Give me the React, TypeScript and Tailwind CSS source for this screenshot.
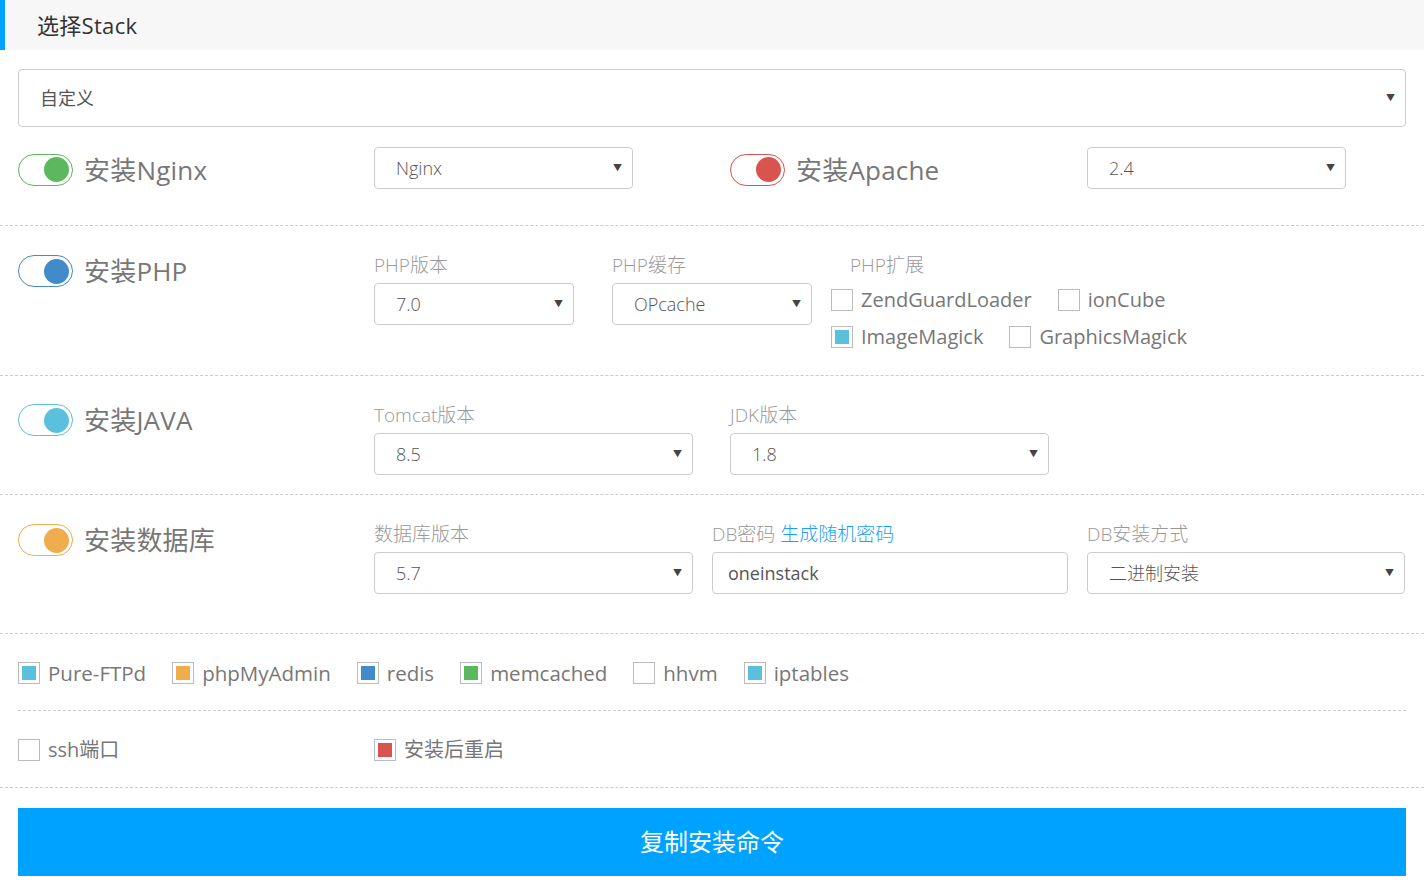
import React from 'react';

const font = { fontFamily: '"Open Sans", "Noto Sans CJK SC", sans-serif' };

type Tone = 'green' | 'red' | 'blue' | 'cyan' | 'orange';

const ring: Record<Tone, string> = {
  green: 'border-[#5cb85c]',
  red: 'border-[#d9534f]',
  blue: 'border-[#428bca]',
  cyan: 'border-[#5bc0de]',
  orange: 'border-[#f0ad4e]',
};

const fill: Record<Tone, string> = {
  green: 'bg-[#5cb85c]',
  red: 'bg-[#d9534f]',
  blue: 'bg-[#428bca]',
  cyan: 'bg-[#5bc0de]',
  orange: 'bg-[#f0ad4e]',
};

function Toggle({ tone, label }: { tone: Tone; label: string }) {
  return (
    <div className="flex items-center gap-[11px]">
      <div className={`w-[55px] h-[32px] rounded-full border ${ring[tone]} flex items-center justify-end pr-[3px] bg-white`}>
        <div className={`w-[25px] h-[25px] rounded-full ${fill[tone]}`} />
      </div>
      <span className="text-[26px] text-[#777] leading-none tracking-[0.2px]">{label}</span>
    </div>
  );
}

function Select({ value, className = '' }: { value: string; className?: string }) {
  return (
    <div className={`h-[42px] border border-[#ccc] rounded-[4px] bg-white flex items-center justify-between pl-[21px] pr-[10px] ${className}`}>
      <span className="text-[18px] text-[#555] font-light">{value}</span>
      <span className="text-[9px] text-[#444]">▼</span>
    </div>
  );
}

function Check({ label, tone, size = 'text-[20.5px]' }: { label: string; tone?: Tone; size?: string }) {
  return (
    <div className="flex items-center mr-[26px]">
      <div className="w-[22px] h-[22px] border border-[#bbb] bg-white flex items-center justify-center mr-[8px]">
        {tone && <div className={`w-[14px] h-[14px] ${fill[tone]}`} />}
      </div>
      <span className={`${size} text-[#777] leading-none`}>{label}</span>
    </div>
  );
}

function Label({ children }: { children: React.ReactNode }) {
  return <div className="text-[19px] text-[#999] font-light leading-[22px] mb-[7px]">{children}</div>;
}

export default function App() {
  return (
    <div className="w-[1424px] h-[884px] bg-white overflow-hidden" style={font}>
      <div className="h-[50px] bg-[#f7f7f7] flex items-center border-l-[5px] border-[#00a2ff] pl-[32px]">
        <span className="text-[22px] text-[#333] tracking-[0.3px]">选择Stack</span>
      </div>

      <div className="px-[18px] pt-[19px]">
        <div className="h-[58px] border border-[#ccc] rounded-[4px] flex items-center justify-between pl-[21px] pr-[10px]">
          <span className="text-[18px] text-[#555]">自定义</span>
          <span className="text-[9px] text-[#444]">▼</span>
        </div>
      </div>

      {/* Nginx / Apache */}
      <div className="flex items-center h-[99px] pb-[16px] border-b border-dashed border-[#ccc]">
        <div className="w-[356px] px-[18px] pt-[3px]"><Toggle tone="green" label="安装Nginx" /></div>
        <div className="w-[356px] px-[18px]"><Select value="Nginx" className="w-[259px]" /></div>
        <div className="w-[356px] px-[18px] pt-[3px]"><Toggle tone="red" label="安装Apache" /></div>
        <div className="w-[356px] px-[19px]"><Select value="2.4" className="w-[259px]" /></div>
      </div>

      {/* PHP */}
      <div className="flex h-[150px] pt-[28px] border-b border-dashed border-[#ccc]">
        <div className="w-[356px] px-[18px] pt-[1px]"><Toggle tone="blue" label="安装PHP" /></div>
        <div className="w-[238px] px-[18px]">
          <Label>PHP版本</Label>
          <Select value="7.0" className="w-[200px]" />
        </div>
        <div className="w-[238px] px-[18px]">
          <Label>PHP缓存</Label>
          <Select value="OPcache" className="w-[200px]" />
        </div>
        <div className="flex-1 pl-[18px]">
          <Label>PHP扩展</Label>
          <div className="ml-[-19px] flex flex-col gap-[15px] pt-[6px]">
            <div className="flex"><Check label="ZendGuardLoader" size="text-[20px]" /><Check label="ionCube" size="text-[20px]" /></div>
            <div className="flex"><Check label="ImageMagick" tone="cyan" size="text-[20px]" /><Check label="GraphicsMagick" size="text-[20px]" /></div>
          </div>
        </div>
      </div>

      {/* JAVA */}
      <div className="flex h-[119px] pt-[28px] border-b border-dashed border-[#ccc]">
        <div className="w-[356px] px-[18px]"><Toggle tone="cyan" label="安装JAVA" /></div>
        <div className="flex gap-[37px] pl-[18px]">
          <div className="w-[319px]">
            <Label>Tomcat版本</Label>
            <Select value="8.5" />
          </div>
          <div className="w-[319px]">
            <Label>JDK版本</Label>
            <Select value="1.8" />
          </div>
        </div>
      </div>

      {/* DB */}
      <div className="flex h-[139px] pt-[28px] border-b border-dashed border-[#ccc]">
        <div className="w-[356px] px-[18px] pt-[1px]"><Toggle tone="orange" label="安装数据库" /></div>
        <div className="flex gap-[19px] pl-[18px]">
          <div className="w-[319px]">
            <Label>数据库版本</Label>
            <Select value="5.7" />
          </div>
          <div className="w-[356px]">
            <Label>DB密码 <span className="text-[#1a9fff]">生成随机密码</span></Label>
            <div className="h-[42px] border border-[#ccc] rounded-[4px] flex items-center pl-[15px]">
              <span className="text-[18px] text-[#555]">oneinstack</span>
            </div>
          </div>
          <div className="w-[318px]">
            <Label>DB安装方式</Label>
            <Select value="二进制安装" />
          </div>
        </div>
      </div>

      {/* extras */}
      <div className="px-[18px]">
        <div className="flex items-center h-[77px] pt-[2px] border-b border-dashed border-[#ccc]">
          <Check label="Pure-FTPd" tone="cyan" />
          <Check label="phpMyAdmin" tone="orange" />
          <Check label="redis" tone="blue" />
          <Check label="memcached" tone="green" />
          <Check label="hhvm" />
          <Check label="iptables" tone="cyan" />
        </div>
      </div>
      <div className="flex items-center h-[77px] pt-[2px] border-b border-dashed border-[#ccc]">
        <div className="w-[356px] px-[18px]"><Check label="ssh端口" size="text-[20px]" /></div>
        <div className="px-[18px]"><Check label="安装后重启" tone="red" size="text-[20px]" /></div>
      </div>
      <div className="px-[18px] pt-[20px]">
        <div className="h-[68px] bg-[#00a2ff] flex items-center justify-center">
          <span className="text-[24px] text-white">复制安装命令</span>
        </div>
      </div>
    </div>
  );
}
